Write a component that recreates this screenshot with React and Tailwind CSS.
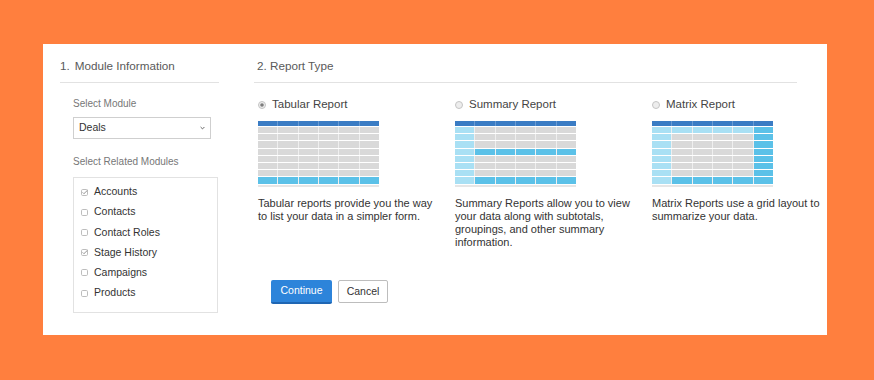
import React from "react";

const cellColor = {
  d: "bg-[#3a7cc4]",
  g: "bg-[#d9d9d9]",
  l: "bg-[#5bc1e8]",
  p: "bg-[#a9e0f4]",
};

const tables = {
  tabular: ["gggggg", "gggggg", "gggggg", "gggggg", "gggggg", "gggggg", "gggggg", "llllll"],
  summary: ["pggggg", "pggggg", "pggggg", "plllll", "pggggg", "pggggg", "pggggg", "plllll"],
  matrix: ["pppppl", "pggggl", "pggggl", "pggggl", "pggggl", "pggggl", "pggggl", "plllll"],
};

const reports = [
  {
    key: "tabular",
    title: "Tabular Report",
    selected: true,
    text: "Tabular reports provide you the way to list your data in a simpler form.",
  },
  {
    key: "summary",
    title: "Summary Report",
    selected: false,
    text: "Summary Reports allow you to view your data along with subtotals, groupings, and other summary information.",
  },
  {
    key: "matrix",
    title: "Matrix Report",
    selected: false,
    text: "Matrix Reports use a grid layout to summarize your data.",
  },
];

const modules = [
  { name: "Accounts", checked: true },
  { name: "Contacts", checked: false },
  { name: "Contact Roles", checked: false },
  { name: "Stage History", checked: true },
  { name: "Campaigns", checked: false },
  { name: "Products", checked: false },
];

function Check({ checked }) {
  return (
    <svg width="7" height="7" viewBox="0 0 7 7" className="shrink-0">
      <rect x="0.5" y="0.5" width="6" height="6" rx="1.2" fill="#fff" stroke="#bdbdbd" />
      {checked ? (
        <path d="M1.6 3.4 L2.9 4.7 L6.6 1.2" fill="none" stroke="#8a8a8a" strokeWidth="0.9" />
      ) : null}
    </svg>
  );
}

function Radio({ selected }) {
  return (
    <svg width="8" height="8" viewBox="0 0 8 8" className="shrink-0">
      <circle cx="4" cy="4" r="3.5" fill="#ededed" stroke="#c4c4c4" />
      {selected ? <circle cx="4" cy="4" r="1.8" fill="#7d7d7d" /> : null}
    </svg>
  );
}

function MiniTable({ rows }) {
  return (
    <div className="flex w-[121px] flex-col">
      <div className="flex flex-col gap-[1px] bg-white">
        <div className="flex h-[5px] gap-[1px] bg-[#6a9bd2]">
          {[0, 1, 2, 3, 4, 5].map((i) => (
            <div key={i} className="flex-1 bg-[#3a7cc4]" />
          ))}
        </div>
        {rows.map((row, r) => (
          <div key={r} className="flex h-[6.2px] gap-[1px] bg-[#efefef]">
            {row.split("").map((c, i) => (
              <div key={i} className={`flex-1 ${cellColor[c]}`} />
            ))}
          </div>
        ))}
      </div>
      <div className="mt-[1px] h-[2px] bg-[#e6e6e6]" />
    </div>
  );
}

export default function App() {
  return (
    <div className="h-[380px] w-full bg-[#ff7f3e] pl-[43px] pt-[44px] font-['Liberation_Sans',Arial,sans-serif]">
      <div className="flex h-[291px] w-[784px] bg-white pl-[17px] pt-[14px]">
        {/* left column */}
        <div className="w-[159px] shrink-0">
          <div className="h-[25px] border-b border-[#e2e2e2] text-[11.7px] leading-[16px] text-[#5a5a5a]">
            1.<span className="ml-[5px]">Module Information</span>
          </div>
          <div className="pl-[13px]">
            <div className="mt-[14px] text-[10px] leading-[14px] text-[#777]">Select Module</div>
            <div className="mt-[6px] flex h-[22px] w-[138px] items-center justify-between border border-[#cfcfcf] pl-[5px] pr-[5px] text-[10.5px] text-[#333]">
              <span>Deals</span>
              <svg width="5" height="4" viewBox="0 0 5 4">
                <path d="M0.6 1 L2.5 2.9 L4.4 1" fill="none" stroke="#555" strokeWidth="0.9" />
              </svg>
            </div>
            <div className="mt-[16px] text-[10px] leading-[14px] text-[#777]">Select Related Modules</div>
            <div className="mt-[8px] h-[136px] w-[145px] border border-[#e2e2e2] pl-[7px] pt-[4px]">
              {modules.map((m) => (
                <div key={m.name} className="flex h-[20.2px] items-center gap-[6px] text-[10.5px] text-[#333]">
                  <Check checked={m.checked} />
                  <span>{m.name}</span>
                </div>
              ))}
            </div>
          </div>
        </div>

        {/* right column */}
        <div className="ml-[35px] w-[543px] shrink-0">
          <div className="h-[25px] border-b border-[#e2e2e2] pl-[3px] text-[11.7px] leading-[16px] text-[#5a5a5a]">
            2. Report Type
          </div>
          <div className="flex pl-[4px]">
            {reports.map((r) => (
              <div key={r.key} className="w-[197px] shrink-0">
                <div className="mt-[15px] flex h-[14px] items-center gap-[6px] text-[11.5px] text-[#444]">
                  <Radio selected={r.selected} />
                  <span>{r.title}</span>
                </div>
                <div className="mt-[9px]">
                  <MiniTable rows={tables[r.key]} />
                </div>
                <p className="mt-[10px] w-[185px] text-[11px] leading-[13px] text-[#333]">{r.text}</p>
              </div>
            ))}
          </div>
          <div className="ml-[17px] mt-[31px] flex items-center gap-[6px]">
            <button className="h-[24px] w-[61px] rounded-[2px] border-b-2 border-[#1f66b3] bg-[#2d84da] text-[10.5px] text-white">
              Continue
            </button>
            <button className="h-[23px] w-[50px] rounded-[2px] border border-[#bdbdbd] bg-white text-[10.5px] text-[#333]">
              Cancel
            </button>
          </div>
        </div>
      </div>
    </div>
  );
}
